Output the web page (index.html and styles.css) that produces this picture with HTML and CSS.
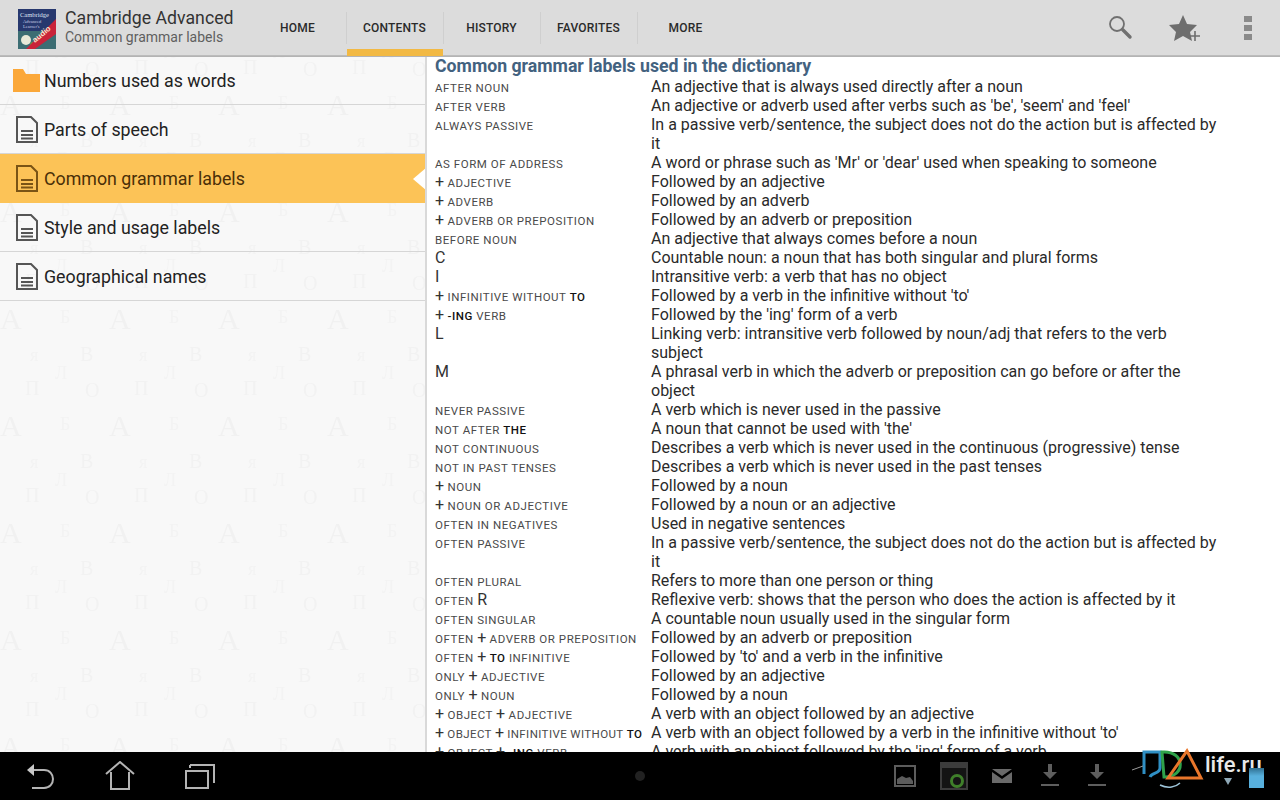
FILE: index.html
```html
<!DOCTYPE html>
<html lang="en">
<head>
  <meta charset="UTF-8" />
  <title>Cambridge Advanced</title>
  <link rel="stylesheet" href="styles.css">
</head>
<body>

  <!-- Action bar -->
  <header class="action-bar">
    <div class="brand">
      <svg class="brand-logo" width="38" height="40" viewBox="0 0 38 40">
        <rect width="38" height="40" fill="#27386e"/>
        <rect y="22" width="38" height="18" fill="#3c6d73"/>
        <circle cx="8" cy="31" r="5" fill="#e8e8d8"/>
        <circle cx="15" cy="36" r="3" fill="#6f9a3c"/>
        <polygon points="38,10 38,25 17,40 8,40" fill="#c9233a"/>
        <text x="2" y="8" class="logo-title">Cambridge</text>
        <text x="5" y="14" class="logo-small">Advanced</text>
        <text x="5" y="19" class="logo-small">Learner's</text>
        <text x="17" y="34" transform="rotate(-40 17 34)" class="logo-audio">audio</text>
      </svg>
      <div class="brand-text">
        <div class="brand-title">Cambridge Advanced</div>
        <div class="brand-sub">Common grammar labels</div>
      </div>
    </div>

    <nav class="tabs">
      <a class="tab">HOME</a>
      <a class="tab tab-active">CONTENTS</a>
      <a class="tab">HISTORY</a>
      <a class="tab">FAVORITES</a>
      <a class="tab">MORE</a>
    </nav>

    <div class="actions">
      <svg width="26" height="26" viewBox="0 0 26 26" fill="none" stroke="#707070">
        <circle cx="9" cy="9" r="7" stroke-width="1.800"/>
        <path d="M14.500 14.500 L22 22" stroke-width="3.400" stroke-linecap="round"/>
      </svg>
      <svg width="34" height="28" viewBox="0 0 34 28">
        <polygon points="15,1 19,10 29,11 22,18 24,27 15,22 6,27 8,18 1,11 11,10" fill="#6e6e6e"/>
        <path d="M27 17 V27 M22 22 H32" stroke="#6e6e6e" stroke-width="1.600" fill="none"/>
      </svg>
      <svg class="action-more" width="8" height="24" viewBox="0 0 8 24" fill="#8a8a8a">
        <rect width="8" height="6"/>
        <rect y="9" width="8" height="6"/>
        <rect y="18" width="8" height="6"/>
      </svg>
    </div>
  </header>

  <main class="content">
    <!-- Left list -->
    <aside class="sidebar">
      <svg class="paper" width="427" height="696">
        <defs>
          <pattern id="letters" width="109" height="107" patternUnits="userSpaceOnUse" y="29">
            <text x="0" y="30" class="paper-big">A</text>
            <text x="80" y="62" class="paper-mid">В</text>
            <text x="30" y="62" class="paper-sm">я</text>
            <text x="25" y="96" class="paper-mid">П</text>
            <text x="85" y="98" class="paper-mid">О</text>
            <text x="55" y="80" class="paper-sm">Л</text>
            <text x="60" y="24" class="paper-sm">Б</text>
          </pattern>
        </defs>
        <rect width="427" height="696" fill="url(#letters)"/>
      </svg>

      <ul class="menu">
        <li class="menu-item">
          <svg class="menu-icon" width="28" height="24" viewBox="0 0 28 24">
            <path d="M0 1 H10 L13 6 H27 V24 H0 Z" fill="#fba83a"/>
          </svg>
          Numbers used as words
        </li>
        <li class="menu-item">
          <svg class="menu-icon doc" width="22" height="27" viewBox="0 0 22 27"><path d="M1 1 H15 L21 7 V26 H1 Z M5 15 H17 M5 19 H17 M5 22.500 H17"/></svg>
          Parts of speech
        </li>
        <li class="menu-item menu-item-selected">
          <svg class="menu-icon doc" width="22" height="27" viewBox="0 0 22 27"><path d="M1 1 H15 L21 7 V26 H1 Z M5 15 H17 M5 19 H17 M5 22.500 H17"/></svg>
          Common grammar labels
          <span class="notch"></span>
        </li>
        <li class="menu-item">
          <svg class="menu-icon doc" width="22" height="27" viewBox="0 0 22 27"><path d="M1 1 H15 L21 7 V26 H1 Z M5 15 H17 M5 19 H17 M5 22.500 H17"/></svg>
          Style and usage labels
        </li>
        <li class="menu-item">
          <svg class="menu-icon doc" width="22" height="27" viewBox="0 0 22 27"><path d="M1 1 H15 L21 7 V26 H1 Z M5 15 H17 M5 19 H17 M5 22.500 H17"/></svg>
          Geographical names
        </li>
      </ul>
    </aside>

    <!-- Article -->
    <article class="article">
      <h1>Common grammar labels used in the dictionary</h1>
      <div class="labels">
        <div class="term">AFTER NOUN</div><div class="def">An adjective that is always used directly after a noun</div>
        <div class="term">AFTER VERB</div><div class="def">An adjective or adverb used after verbs such as 'be', 'seem' and 'feel'</div>
        <div class="term">ALWAYS PASSIVE</div><div class="def">In a passive verb/sentence, the subject does not do the action but is affected by it</div>
        <div class="term">AS FORM OF ADDRESS</div><div class="def">A word or phrase such as 'Mr' or 'dear' used when speaking to someone</div>
        <div class="term"><i>+</i> ADJECTIVE</div><div class="def">Followed by an adjective</div>
        <div class="term"><i>+</i> ADVERB</div><div class="def">Followed by an adverb</div>
        <div class="term"><i>+</i> ADVERB OR PREPOSITION</div><div class="def">Followed by an adverb or preposition</div>
        <div class="term">BEFORE NOUN</div><div class="def">An adjective that always comes before a noun</div>
        <div class="term"><i>C</i></div><div class="def">Countable noun: a noun that has both singular and plural forms</div>
        <div class="term"><i>I</i></div><div class="def">Intransitive verb: a verb that has no object</div>
        <div class="term"><i>+</i> INFINITIVE WITHOUT <b>TO</b></div><div class="def">Followed by a verb in the infinitive without 'to'</div>
        <div class="term"><i>+</i> <b>-ING</b> VERB</div><div class="def">Followed by the 'ing' form of a verb</div>
        <div class="term"><i>L</i></div><div class="def">Linking verb: intransitive verb followed by noun/adj that refers to the verb subject</div>
        <div class="term"><i>M</i></div><div class="def">A phrasal verb in which the adverb or preposition can go before or after the object</div>
        <div class="term">NEVER PASSIVE</div><div class="def">A verb which is never used in the passive</div>
        <div class="term">NOT AFTER <b>THE</b></div><div class="def">A noun that cannot be used with 'the'</div>
        <div class="term">NOT CONTINUOUS</div><div class="def">Describes a verb which is never used in the continuous (progressive) tense</div>
        <div class="term">NOT IN PAST TENSES</div><div class="def">Describes a verb which is never used in the past tenses</div>
        <div class="term"><i>+</i> NOUN</div><div class="def">Followed by a noun</div>
        <div class="term"><i>+</i> NOUN OR ADJECTIVE</div><div class="def">Followed by a noun or an adjective</div>
        <div class="term">OFTEN IN NEGATIVES</div><div class="def">Used in negative sentences</div>
        <div class="term">OFTEN PASSIVE</div><div class="def">In a passive verb/sentence, the subject does not do the action but is affected by it</div>
        <div class="term">OFTEN PLURAL</div><div class="def">Refers to more than one person or thing</div>
        <div class="term">OFTEN <i>R</i></div><div class="def">Reflexive verb: shows that the person who does the action is affected by it</div>
        <div class="term">OFTEN SINGULAR</div><div class="def">A countable noun usually used in the singular form</div>
        <div class="term">OFTEN <i>+</i> ADVERB OR PREPOSITION</div><div class="def">Followed by an adverb or preposition</div>
        <div class="term">OFTEN <i>+</i> <b>TO</b> INFINITIVE</div><div class="def">Followed by 'to' and a verb in the infinitive</div>
        <div class="term">ONLY <i>+</i> ADJECTIVE</div><div class="def">Followed by an adjective</div>
        <div class="term">ONLY <i>+</i> NOUN</div><div class="def">Followed by a noun</div>
        <div class="term"><i>+</i> OBJECT <i>+</i> ADJECTIVE</div><div class="def">A verb with an object followed by an adjective</div>
        <div class="term term-tight"><i>+</i> OBJECT <i>+</i> INFINITIVE WITHOUT <b>TO</b></div><div class="def">A verb with an object followed by a verb in the infinitive without 'to'</div>
        <div class="term"><i>+</i> OBJECT <i>+</i> <b>-ING</b> VERB</div><div class="def">A verb with an object followed by the 'ing' form of a verb</div>
      </div>
    </article>
  </main>

  <!-- System bar -->
  <footer class="system-bar">
    <div class="nav-buttons">
      <svg width="30" height="28" viewBox="0 0 30 28" fill="none" stroke="#b4b4b4" stroke-width="2">
        <polygon points="2,8 9,2 9,14" fill="#c8c8c8" stroke="none"/>
        <path d="M9 8 H19 C31 8 31 26 19 26 H7"/>
      </svg>
      <svg width="30" height="30" viewBox="0 0 30 30" fill="none" stroke="#b4b4b4" stroke-width="2">
        <path d="M1 13 L15 1 L29 13"/>
        <path d="M6 11 V28 H24 V11"/>
      </svg>
      <svg width="30" height="26" viewBox="0 0 30 26" fill="none" stroke="#b4b4b4" stroke-width="2">
        <path d="M5 2 H29 V20 M5 2 V5"/>
        <rect x="1" y="8" width="22" height="17"/>
      </svg>
    </div>

    <span class="home-dot"></span>

    <div class="notifications">
      <svg width="22" height="22" viewBox="0 0 22 22">
        <rect x="1" y="1" width="20" height="20" fill="none" stroke="#5c5c5c" stroke-width="2"/>
        <path d="M3 19 V14 L8 11 L12 13 L16 12 L19 16 V19 Z" fill="#5c5c5c"/>
      </svg>
      <svg width="28" height="28" viewBox="0 0 28 28">
        <rect x="0" y="0" width="28" height="28" fill="#3c3c3c"/>
        <rect x="2" y="6" width="24" height="20" fill="#141414"/>
        <circle cx="17" cy="19" r="5.500" fill="none" stroke="#3f7f2a" stroke-width="3"/>
      </svg>
      <svg width="20" height="14" viewBox="0 0 20 14">
        <path d="M0 0 H20 L10 7 Z M0 3 L10 10 L20 3 V14 H0 Z" fill="#6a6a6a"/>
      </svg>
      <svg class="download" width="18" height="24" viewBox="0 0 18 24" fill="#5e5e5e">
        <path d="M7 0 H11 V8 H16 L9 15 L2 8 H7 Z"/>
        <rect y="20" width="18" height="2"/>
      </svg>
      <svg class="download" width="18" height="24" viewBox="0 0 18 24" fill="#5e5e5e">
        <path d="M7 0 H11 V8 H16 L9 15 L2 8 H7 Z"/>
        <rect y="20" width="18" height="2"/>
      </svg>
    </div>

    <!-- Site watermark over the tray -->
    <div class="watermark">
      <svg width="100" height="50" viewBox="0 0 100 50" fill="none" stroke-width="3">
        <path d="M12 30 V8 H28 V24 C28 30 20 28 18 33" stroke="#2f8fc4"/>
        <path d="M30 8 C54 6 54 34 32 33 Z" stroke="#2fa24a"/>
        <path d="M36 34 L55 7 L69 34 Z" stroke="#e9762b"/>
        <path d="M0 26 L11 22" stroke="#9a9a9a" stroke-width="1"/>
        <path d="M28 41 C36 45 44 43 48 39" stroke="#9cc3d8" stroke-width="1.500"/>
        <path d="M92 34 L100 34 L96 41 Z" fill="#8fa9b8" stroke="none"/>
      </svg>
      <span class="watermark-text">life.ru</span>
      <span class="battery"></span>
    </div>
  </footer>

</body>
</html>
```

FILE: styles.css
```css
* {
  box-sizing: border-box;
}

html, body {
  height: 100%;
}

body {
  margin: 0;
  height: 800px;
  overflow: hidden;
  display: flex;
  flex-direction: column;
  font-family: Roboto, "Liberation Sans", sans-serif;
  color: #222;
  background: #fff;
}

/* Action bar */
.action-bar {
  height: 56px;
  flex: none;
  display: flex;
  align-items: stretch;
  background: #dcdcdc;
  box-shadow: 0 1px 0 #b4b4b4, inset 0 -1px 0 #bcbcbc;
  position: relative;
  z-index: 2;
}

.brand {
  width: 249px;
  flex: none;
  display: flex;
  align-items: center;
  gap: 9px;
  padding-left: 18px;
}

.brand-logo {
  margin-top: 1px;
}

.logo-title {
  font: 6.5px "Liberation Serif", serif;
  fill: #dfe4f2;
}

.logo-small {
  font: 4.5px "Liberation Serif", serif;
  fill: #c7cfe4;
}

.logo-audio {
  font: bold 8px "Liberation Sans", sans-serif;
  fill: #f7e3d0;
}

.brand-text {
  margin-bottom: 3px;
}

.brand-title {
  font-size: 17.7px;
  line-height: 21px;
  color: #333;
}

.brand-sub {
  font-size: 14px;
  line-height: 17px;
  color: #5f5f5f;
}

.tabs {
  display: flex;
}

.tab {
  width: 97px;
  display: flex;
  align-items: center;
  justify-content: center;
  font-size: 12px;
  font-weight: 500;
  letter-spacing: 0.2px;
  color: #2a2a2a;
  position: relative;
}

.tab + .tab::before {
  content: "";
  position: absolute;
  left: 0;
  top: 12px;
  bottom: 12px;
  width: 1px;
  background: #cfcfcf;
}

.tab-active::after {
  content: "";
  position: absolute;
  left: 1px;
  right: 0;
  bottom: 0;
  height: 7px;
  background: #f2b944;
}

.actions {
  margin-left: auto;
  display: flex;
  align-items: center;
  padding-right: 28px;
  gap: 34px;
}

.action-more {
  margin-left: 8px;
}

/* Main area */
.content {
  flex: 1;
  min-height: 0;
  display: flex;
}

.sidebar {
  width: 427px;
  flex: none;
  position: relative;
  background: #f8f8f8;
  border-right: 2px solid #d9d9d9;
  overflow: hidden;
}

.paper {
  position: absolute;
  left: 0;
  top: 0;
  filter: blur(0.6px);
}

.paper-big {
  font: 30px "Liberation Serif", serif;
  fill: #f1f1f1;
}

.paper-mid {
  font: 20px "Liberation Serif", serif;
  fill: #f2f2f2;
}

.paper-sm {
  font: 18px "Liberation Serif", serif;
  fill: #f3f3f3;
}

.menu {
  list-style: none;
  margin: 0;
  padding: 0;
  position: relative;
}

.menu-item {
  height: 49px;
  display: flex;
  align-items: center;
  gap: 6px;
  padding-left: 16px;
  font-size: 17.8px;
  color: #222;
  border-bottom: 1px solid #d6d6d6;
  position: relative;
}

.menu-item:first-child {
  padding-left: 13px;
  gap: 3px;
}

.menu-item-selected {
  background: #fcc357;
  color: #4a2f08;
  border-bottom: none;
  margin-right: -2px;
}

.menu-icon.doc {
  fill: none;
  stroke: #555;
  stroke-width: 2;
}

.menu-item-selected .menu-icon.doc {
  stroke: #7a5415;
}

.notch {
  position: absolute;
  right: 0;
  top: 50%;
  margin-top: -12px;
  border-style: solid;
  border-width: 12px 14px 12px 0;
  border-color: transparent #fff transparent transparent;
}

.article {
  flex: 1;
  min-width: 0;
  padding-left: 8px;
  overflow: hidden;
}

.article h1 {
  margin: 0;
  height: 21px;
  font-size: 17.7px;
  line-height: 21px;
  font-weight: 700;
  color: #436280;
}

.labels {
  display: grid;
  grid-template-columns: 216px 570px;
  align-items: baseline;
}

.term {
  font-size: 11.5px;
  line-height: 14px;
  letter-spacing: 0.55px;
  color: #4a4a4a;
  white-space: nowrap;
}

.term-tight {
  letter-spacing: 0.4px;
}

.term i {
  font-style: normal;
  font-size: 16px;
  color: #333;
  letter-spacing: 0;
}

.term b {
  font-weight: 500;
  color: #111;
}

.def {
  font-size: 16px;
  line-height: 19px;
  color: #2a2a2a;
}

/* System bar */
.system-bar {
  height: 48px;
  flex: none;
  background: #000;
  display: grid;
  grid-template-columns: 1fr auto 1fr;
  align-items: center;
  position: relative;
  z-index: 2;
}

.nav-buttons {
  display: flex;
  align-items: center;
  gap: 50px;
  padding-left: 25px;
}

.home-dot {
  width: 10px;
  height: 10px;
  border-radius: 50%;
  background: #222;
}

.notifications {
  display: flex;
  align-items: center;
  padding-left: 249px;
  gap: 24px;
}

.download {
  margin-left: 5px;
}

.watermark {
  position: absolute;
  left: 1132px;
  top: -8px;
  width: 148px;
  height: 50px;
}

.watermark-text {
  position: absolute;
  left: 73px;
  top: 7px;
  font-size: 22px;
  line-height: 28px;
  font-weight: 500;
  color: #e8e8e8;
}

.battery {
  position: absolute;
  right: 16px;
  top: 24px;
  width: 15px;
  height: 20px;
  background: linear-gradient(#2f6f90, #58b0dd 40%, #58b0dd);
}
```
